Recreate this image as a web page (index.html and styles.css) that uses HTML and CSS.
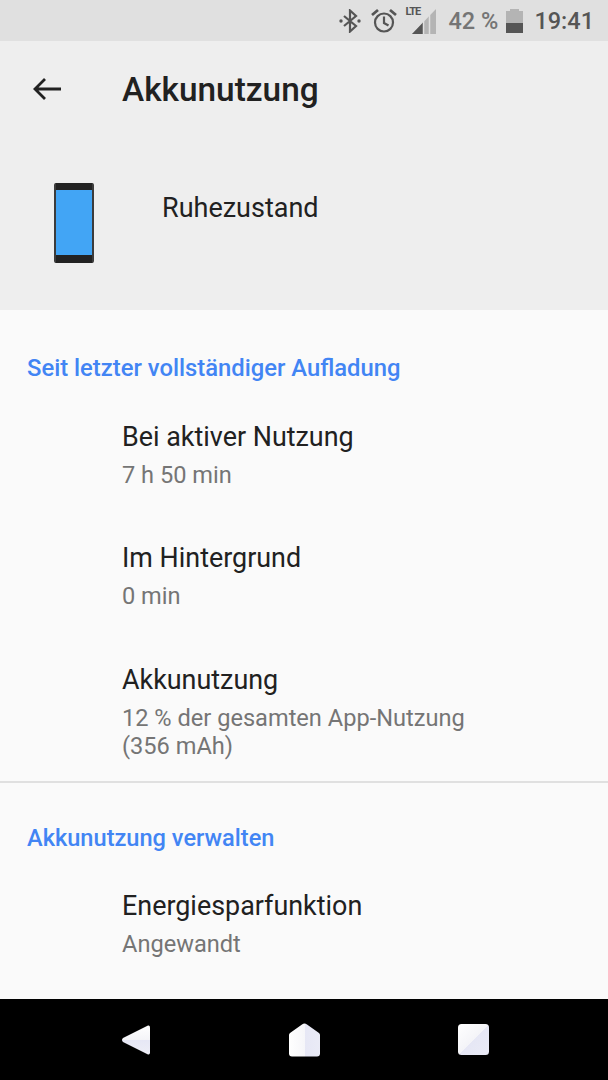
FILE: index.html
```html
<!DOCTYPE html>
<html lang="de">
<head>
    <meta charset="UTF-8">
    <meta name="viewport" content="width=device-width, initial-scale=1.0">
    <title>Akkunutzung</title>
    <link rel="stylesheet" href="styles.css">
</head>
<body>
    <div class="screen">
        <div class="status-bar">
            <svg class="ic-bt" width="22" height="24" viewBox="0 0 22 24">
                <path d="M5 7l12 10-6 5.500V1.500l6 5.500L5 17" fill="none" stroke="#555" stroke-width="2.200"/>
                <circle cx="2" cy="12" r="1.700" fill="#555"/>
                <circle cx="20" cy="12" r="1.700" fill="#555"/>
            </svg>
            <svg class="ic-alarm" width="26" height="26" viewBox="0 0 26 26">
                <circle cx="13" cy="14.500" r="9" fill="none" stroke="#555" stroke-width="2.200"/>
                <path d="M13 8.500V15L17.500 17.500" fill="none" stroke="#555" stroke-width="2.200"/>
                <path d="M1 7L7 2M25 7L19 2" fill="none" stroke="#555" stroke-width="2.800"/>
            </svg>
            <div class="signal">
                <span class="lte">LTE</span>
                <svg width="24" height="25" viewBox="0 0 24 25">
                    <path d="M0 25L24 0V25Z" fill="#b4b4b4"/>
                    <path d="M0 25L11 13.500V25Z" fill="#555"/>
                    <path d="M11.500 12V25M17.500 6V25" stroke="#e0e0e0" stroke-width="1.500"/>
                </svg>
            </div>
            <span class="pct">42 %</span>
            <div class="battery">
                <div class="battery-nub"></div>
                <div class="battery-body"><div class="battery-fill"></div></div>
            </div>
            <span class="clock">19:41</span>
        </div>

        <header class="app-header">
            <div class="toolbar">
                <svg class="back" width="30" height="30" viewBox="0 0 30 30">
                    <path d="M29 15H3M13 5L3 15l10 10" fill="none" stroke="#212121" stroke-width="2.800"/>
                </svg>
                <h1>Akkunutzung</h1>
            </div>
            <div class="app-row">
                <div class="phone"><div class="phone-display"></div></div>
                <span class="app-name">Ruhezustand</span>
            </div>
        </header>

        <main class="content">
            <section class="group first">
                <h2>Seit letzter vollständiger Aufladung</h2>
                <div class="pref">
                    <div class="pref-title">Bei aktiver Nutzung</div>
                    <div class="pref-sub">7 h 50 min</div>
                </div>
                <div class="pref">
                    <div class="pref-title">Im Hintergrund</div>
                    <div class="pref-sub">0 min</div>
                </div>
                <div class="pref">
                    <div class="pref-title">Akkunutzung</div>
                    <div class="pref-sub">12 % der gesamten App-Nutzung<br>(356 mAh)</div>
                </div>
            </section>
            <section class="group second">
                <h2>Akkunutzung verwalten</h2>
                <div class="pref">
                    <div class="pref-title">Energiesparfunktion</div>
                    <div class="pref-sub">Angewandt</div>
                </div>
            </section>
        </main>

        <nav class="nav-bar">
            <svg width="30" height="32" viewBox="0 0 30 32">
                <defs>
                    <linearGradient id="g1" x1="0" y1="0" x2="0" y2="1">
                        <stop offset="0" stop-color="#ffffff"/>
                        <stop offset="0.5" stop-color="#f4f4f8"/>
                        <stop offset="0.5" stop-color="#e6e7f5"/>
                        <stop offset="1" stop-color="#eeeef6"/>
                    </linearGradient>
                    <linearGradient id="g2" x1="0" y1="0" x2="1" y2="0">
                        <stop offset="0" stop-color="#ffffff"/>
                        <stop offset="0.5" stop-color="#f6f6f9"/>
                        <stop offset="0.5" stop-color="#e6e7f5"/>
                        <stop offset="1" stop-color="#eaebf6"/>
                    </linearGradient>
                    <linearGradient id="g3" x1="0" y1="0" x2="1" y2="1">
                        <stop offset="0" stop-color="#ffffff"/>
                        <stop offset="0.5" stop-color="#f4f4f8"/>
                        <stop offset="0.5" stop-color="#e6e7f5"/>
                        <stop offset="1" stop-color="#eaebf6"/>
                    </linearGradient>
                </defs>
                <path d="M27 1.500Q29 1 29 3.500V28.500Q29 31 27 30.500L2 18Q0 16 2 14Z" fill="url(#g1)"/>
            </svg>
            <svg width="31" height="34" viewBox="0 0 31 34">
                <path d="M13 1.500Q15.500-.5 18 1.500L30 10Q31 11 31 12V30.500Q31 33.500 28 33.500H3Q0 33.500 0 30.500V12Q0 11 1 10Z" fill="url(#g2)"/>
            </svg>
            <svg width="31" height="31" viewBox="0 0 31 31">
                <rect width="31" height="31" rx="3.500" fill="url(#g3)"/>
            </svg>
        </nav>
    </div>
</body>
</html>
```

FILE: styles.css
```css
html, body {
    margin: 0;
    padding: 0;
}

body {
    font-family: Roboto, "Liberation Sans", sans-serif;
    background: #fafafa;
}

.screen {
    width: 608px;
    height: 1080px;
    display: flex;
    flex-direction: column;
    overflow: hidden;
}

.status-bar {
    height: 41px;
    box-sizing: border-box;
    background: #e0e0e0;
    display: flex;
    align-items: center;
    justify-content: flex-end;
    padding-right: 14px;
    color: #555;
}

.ic-bt {
    margin-right: 10px;
}

.ic-alarm {
    margin-right: 9px;
}

.signal {
    position: relative;
    width: 30px;
    height: 27px;
    display: flex;
    justify-content: flex-end;
    align-items: flex-end;
    margin-right: 13px;
}

.lte {
    position: absolute;
    left: 0;
    top: -1px;
    font-size: 11px;
    font-weight: 700;
    letter-spacing: -1px;
    line-height: 12px;
}

.pct {
    font-size: 23.500px;
    font-weight: 500;
    color: #757575;
    margin-right: 8px;
}

.battery {
    width: 17px;
    display: flex;
    flex-direction: column;
    align-items: center;
    margin-right: 11px;
}

.battery-nub {
    width: 9px;
    height: 2px;
    background: #b4b4b4;
}

.battery-body {
    width: 100%;
    height: 22px;
    background: #b4b4b4;
    display: flex;
    align-items: flex-end;
}

.battery-fill {
    width: 100%;
    height: 10px;
    background: #555;
}

.clock {
    font-size: 23.500px;
    font-weight: 500;
}

.app-header {
    height: 269px;
    background: #eeeeee;
}

.toolbar {
    height: 96px;
    display: flex;
    align-items: center;
    padding-left: 32px;
}

.back {
    margin-right: 60px;
}

.toolbar h1 {
    margin: 0;
    font-size: 33.400px;
    font-weight: 500;
    color: #212121;
}

.app-row {
    display: flex;
    align-items: flex-start;
    padding: 46px 0 0 54px;
}

.phone {
    width: 40px;
    height: 80px;
    box-sizing: border-box;
    background: #222;
    border-radius: 2px;
    border-left: 2px solid #3c3c3c;
    border-right: 2px solid #3c3c3c;
    padding: 7px 0 8px;
    margin-right: 68px;
}

.phone-display {
    height: 100%;
    background: #42a5f5;
}

.app-name {
    font-size: 27px;
    line-height: 50px;
    color: #212121;
}

.content {
    flex: 1;
    background: #fafafa;
    min-height: 0;
    overflow: hidden;
}

.group {
    padding-top: 42px;
}

.group.first {
    border-bottom: 2px solid #e0e0e0;
}

.group.first .pref:last-child {
    padding-bottom: 20px;
}

.group.second {
    padding-top: 39px;
}

.group h2 {
    margin: 0 0 8.500px 27px;
    font-size: 23.800px;
    line-height: 32px;
    font-weight: 500;
    color: #4285f4;
}

.group.second h2 {
    font-size: 23.600px;
}

.pref {
    padding: 26px 24px 25px 122px;
}

.pref-title {
    font-size: 26.900px;
    line-height: 36px;
    color: #212121;
}

.pref-sub {
    font-size: 23.600px;
    line-height: 28.500px;
    color: #757575;
    margin-top: 6px;
}

.nav-bar {
    height: 81px;
    background: #000;
    display: flex;
    align-items: center;
    padding-left: 121px;
    gap: 138px;
}
```
